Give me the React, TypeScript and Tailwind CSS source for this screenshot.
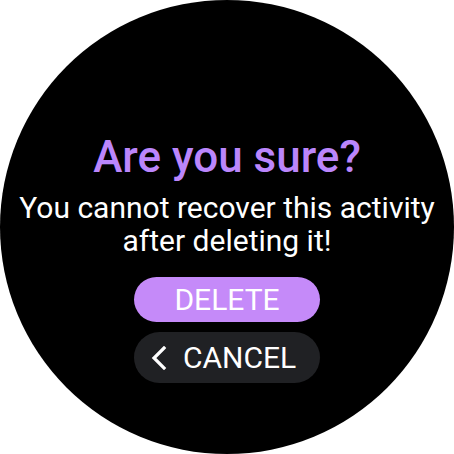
const ChevronBack = () => (
  <svg width="16" height="24" viewBox="0 0 16 24" fill="none" className="shrink-0">
    <path d="M13 2 3 12l10 10" stroke="white" strokeWidth="3.2" strokeLinecap="square" />
  </svg>
);

const App = () => {
  return (
    <div className="flex h-[454px] w-[454px] items-center justify-center bg-white font-['Roboto',sans-serif]">
      <div className="flex h-[454px] w-[454px] flex-col items-center rounded-full bg-black pt-[131px]">
        <h1 className="text-[44px] font-medium leading-[52px] text-[#bb86fc]">Are you sure?</h1>
        <p className="mt-[8px] text-center text-[30px] leading-[33px] text-white">
          You cannot recover this activity
          <br />
          after deleting it!
        </p>
        <button className="mt-[20px] flex h-[45px] w-[186px] items-center justify-center rounded-full bg-[#c58af9] text-[30px] text-white">
          DELETE
        </button>
        <button className="mt-[10px] flex h-[51px] w-[186px] items-center gap-[16px] rounded-full bg-[#202124] pl-[17px] text-[30px] text-white">
          <ChevronBack />
          <span>CANCEL</span>
        </button>
      </div>
    </div>
  );
};

export default App;
